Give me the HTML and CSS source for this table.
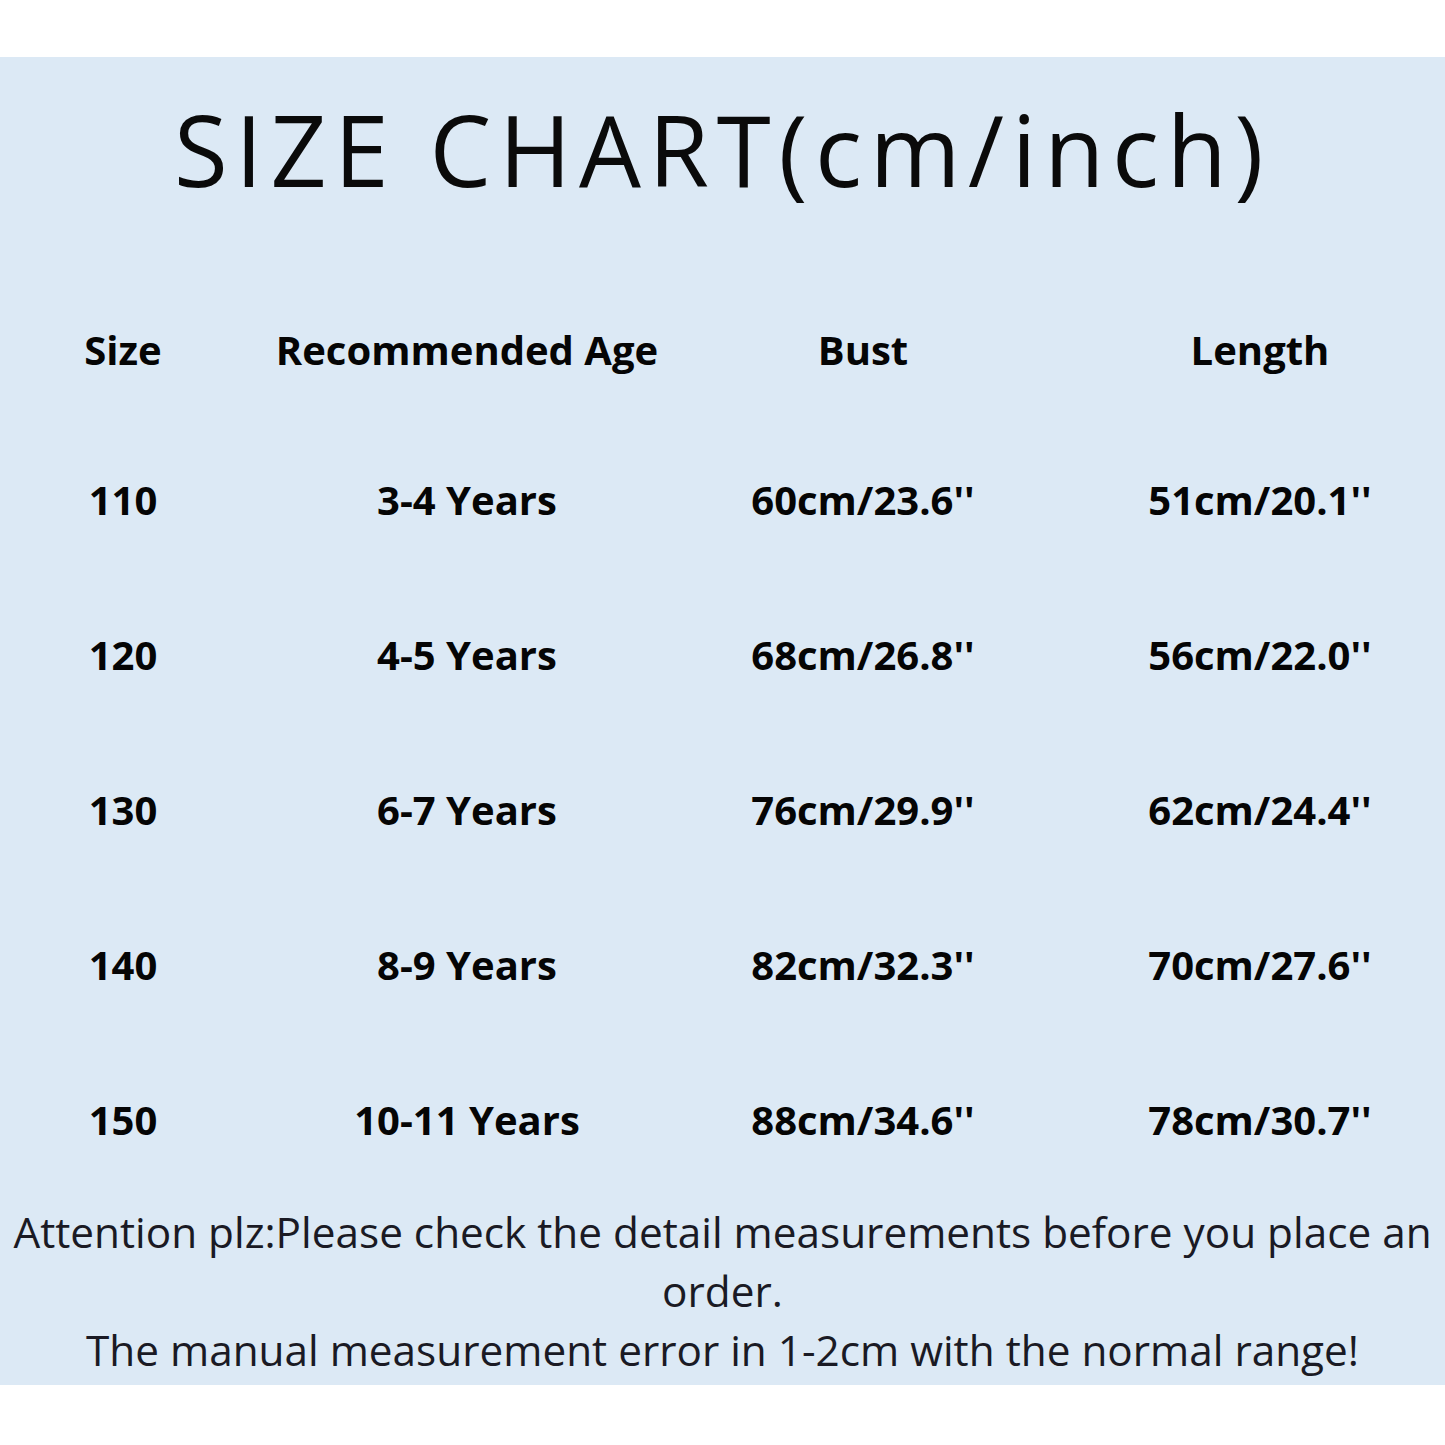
FILE: index.html
```html
<!DOCTYPE html>
<html>
<head>
<meta charset="utf-8">
<link rel="stylesheet" href="styles.css">
</head>
<body>
<div class="panel">
  <h1 class="title">SIZE CHART(cm/inch)</h1>
  <div class="chart">
    <div class="cell head c1">Size</div>
    <div class="cell head c2">Recommended Age</div>
    <div class="cell head c3">Bust</div>
    <div class="cell head c4">Length</div>

    <div class="cell c1">110</div>
    <div class="cell c2">3-4 Years</div>
    <div class="cell c3">60cm/23.6''</div>
    <div class="cell c4">51cm/20.1''</div>

    <div class="cell c1">120</div>
    <div class="cell c2">4-5 Years</div>
    <div class="cell c3">68cm/26.8''</div>
    <div class="cell c4">56cm/22.0''</div>

    <div class="cell c1">130</div>
    <div class="cell c2">6-7 Years</div>
    <div class="cell c3">76cm/29.9''</div>
    <div class="cell c4">62cm/24.4''</div>

    <div class="cell c1">140</div>
    <div class="cell c2">8-9 Years</div>
    <div class="cell c3">82cm/32.3''</div>
    <div class="cell c4">70cm/27.6''</div>

    <div class="cell c1">150</div>
    <div class="cell c2">10-11 Years</div>
    <div class="cell c3">88cm/34.6''</div>
    <div class="cell c4">78cm/30.7''</div>
  </div>
  <p class="note">Attention plz:Please check the detail measurements before you place an order.<br>The manual measurement error in 1-2cm with the normal range!</p>
</div>
</body>
</html>
```
FILE: styles.css
```css
html, body {
  margin: 0;
  padding: 0;
  background: #ffffff;
}
.panel {
  margin-top: 57px;
  height: 1328px;
  background: #dce9f5;
  padding-top: 42px;
  box-sizing: border-box;
  font-family: "Open Sans", "DejaVu Sans", sans-serif;
  color: #000;
}
.title {
  margin: 0 0 78px 0;
  padding-left: 0;
  font-family: "Open Sans", sans-serif;
  font-weight: 400;
  font-size: 98px;
  line-height: 100px;
  letter-spacing: 7.7px;
  text-align: center;
  color: #0a0a0a;
}
.chart {
  display: grid;
  grid-template-columns: 246px 442px 350px 407px;
  grid-template-rows: 145px repeat(5, 155px);
}
.cell {
  display: flex;
  align-items: center;
  justify-content: center;
  font-weight: 700;
  font-size: 40px;
  white-space: nowrap;
  color: #050505;
}
.c4 {
  padding-left: 37px;
}
.note {
  margin: 5px 0 0 0;
  text-align: center;
  font-size: 42.3px;
  line-height: 59px;
  color: #1a1a24;
}
```
